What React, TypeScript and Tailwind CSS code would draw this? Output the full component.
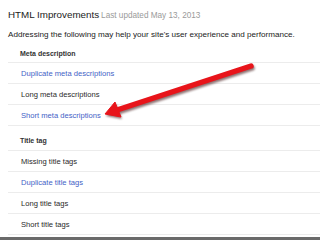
const metaRows = [
  { label: "Duplicate meta descriptions", link: true },
  { label: "Long meta descriptions", link: false },
  { label: "Short meta descriptions", link: true },
];

const titleRows = [
  { label: "Missing title tags", link: false },
  { label: "Duplicate title tags", link: true },
  { label: "Long title tags", link: false },
  { label: "Short title tags", link: false },
];

type Row = { label: string; link: boolean };

function Section({ title, rows, className, headClass }: { title: string; rows: Row[]; className?: string; headClass: string }) {
  return (
    <div className={className}>
      <div className={`flex items-center border-b border-[#ececec] pl-[12px] text-[7px] font-bold text-[#333] ${headClass}`}>
        {title}
      </div>
      {rows.map((r) => (
        <div
          key={r.label}
          className={`flex h-[21px] items-center border-b border-[#ececec] pl-[13px] pt-[1px] text-[7.6px] ${
            r.link ? "text-[#3f62c6]" : "text-[#2a2a2a]"
          }`}
        >
          {r.label}
        </div>
      ))}
    </div>
  );
}

// red pointer drawn over the list
function Arrow() {
  return (
    <svg
      className="pointer-events-none absolute left-0 top-0"
      width={320}
      height={240}
      viewBox="0 0 320 240"
    >
      <defs>
        <filter id="arrow-shadow" x="-20%" y="-20%" width="140%" height="140%">
          <feGaussianBlur stdDeviation="1" />
        </filter>
      </defs>
      <g transform="translate(1 2)" opacity="0.55" filter="url(#arrow-shadow)">
        <line x1={251} y1={66} x2={117} y2={110} stroke="#300" strokeWidth={5.5} strokeLinecap="round" />
        <polygon points="105,114 115,102 121,117" fill="#300" />
      </g>
      <line x1={251} y1={66} x2={117} y2={110} stroke="#e8141a" strokeWidth={5.5} strokeLinecap="round" />
      <polygon points="105,114 115,102 121,117" fill="#e8141a" stroke="#e8141a" strokeWidth={1} strokeLinejoin="round" />
    </svg>
  );
}

export default function App() {
  return (
    <div className="relative h-[240px] w-[320px] overflow-hidden bg-white font-['Liberation_Sans',Arial,sans-serif]">
      <div className="flex h-[46px] flex-col pl-[8px] pt-[8px]">
        <div className="flex items-baseline gap-[2px] leading-[14px]">
          <span className="text-[9.8px] text-[#222]">HTML Improvements</span>
          <span className="text-[8.2px] text-[#9a9a9a]">Last updated May 13, 2013</span>
        </div>
        <div className="mt-[6px] text-[8.1px] leading-[12px] text-[#222]">
          Addressing the following may help your site's user experience and performance.
        </div>
      </div>
      <div className="pl-[8px]">
        <Section title="Meta description" rows={metaRows} headClass="h-[17px]" />
        <Section title="Title tag" rows={titleRows} headClass="h-[18px]" className="mt-[7px]" />
      </div>
      <div className="mt-[2px] h-[3px] w-full bg-[#6a6a6a]" />
      <Arrow />
    </div>
  );
}
